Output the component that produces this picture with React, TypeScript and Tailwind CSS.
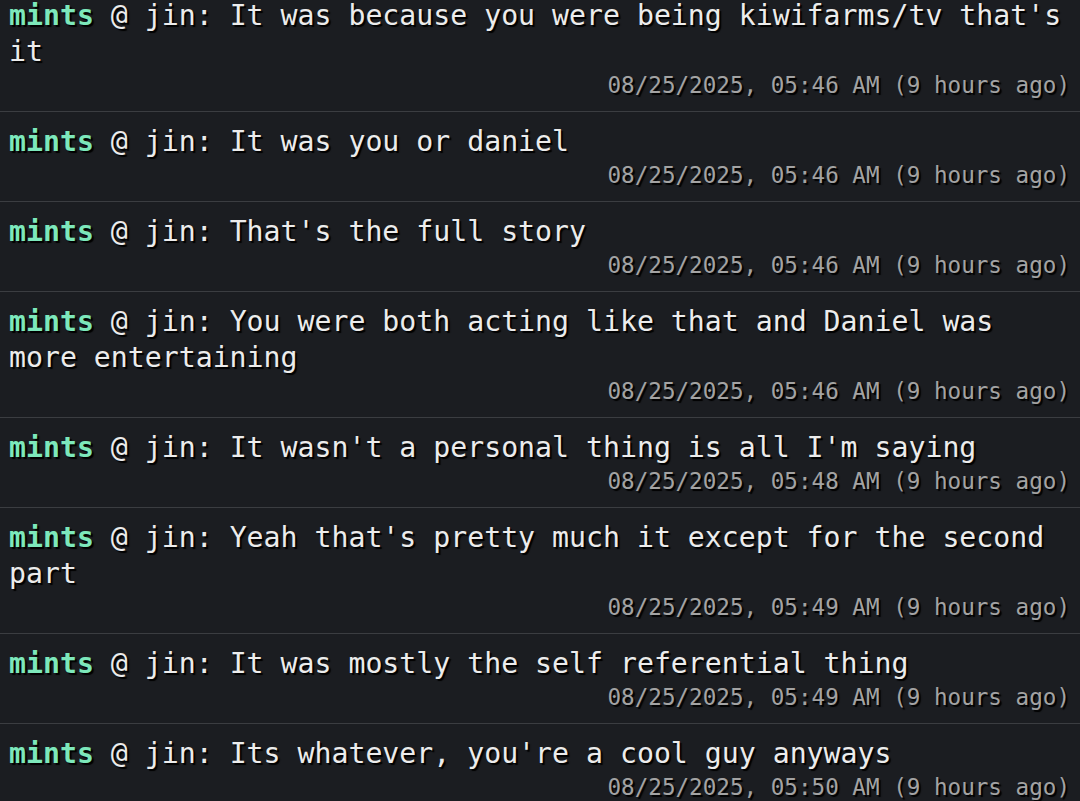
import React from "react";

const rows = [
  { msg: "It was because you were being kiwifarms/tv that's it", time: "08/25/2025, 05:46 AM (9 hours ago)" },
  { msg: "It was you or daniel", time: "08/25/2025, 05:46 AM (9 hours ago)" },
  { msg: "That's the full story", time: "08/25/2025, 05:46 AM (9 hours ago)" },
  { msg: "You were both acting like that and Daniel was more entertaining", time: "08/25/2025, 05:46 AM (9 hours ago)" },
  { msg: "It wasn't a personal thing is all I'm saying", time: "08/25/2025, 05:48 AM (9 hours ago)" },
  { msg: "Yeah that's pretty much it except for the second part", time: "08/25/2025, 05:49 AM (9 hours ago)" },
  { msg: "It was mostly the self referential thing", time: "08/25/2025, 05:49 AM (9 hours ago)" },
  { msg: "Its whatever, you're a cool guy anyways", time: "08/25/2025, 05:50 AM (9 hours ago)" },
];

export default function App() {
  return (
    <div className="w-[1080px] h-[801px] overflow-hidden bg-[#1b1d21] font-['DejaVu_Sans_Mono',monospace]">
      <div className="mt-[-14px] flex flex-col">
        {rows.map((r, i) => (
          <div key={i} className="border-b border-[#3b3d41] pt-[12px] pb-[10px] pl-[9px] pr-[10px]">
            <div className="text-[28.2px] leading-[36px] text-[#ececec] [text-shadow:2px_2px_1px_#000] break-words">
              <span className="font-bold text-[#7de8bb]">mints</span> @ jin: {r.msg}
            </div>
            <div className="text-right text-[22.6px] leading-[31px] text-[#a3a3a3] [text-shadow:2px_2px_1px_#000]">
              {r.time}
            </div>
          </div>
        ))}
      </div>
    </div>
  );
}
